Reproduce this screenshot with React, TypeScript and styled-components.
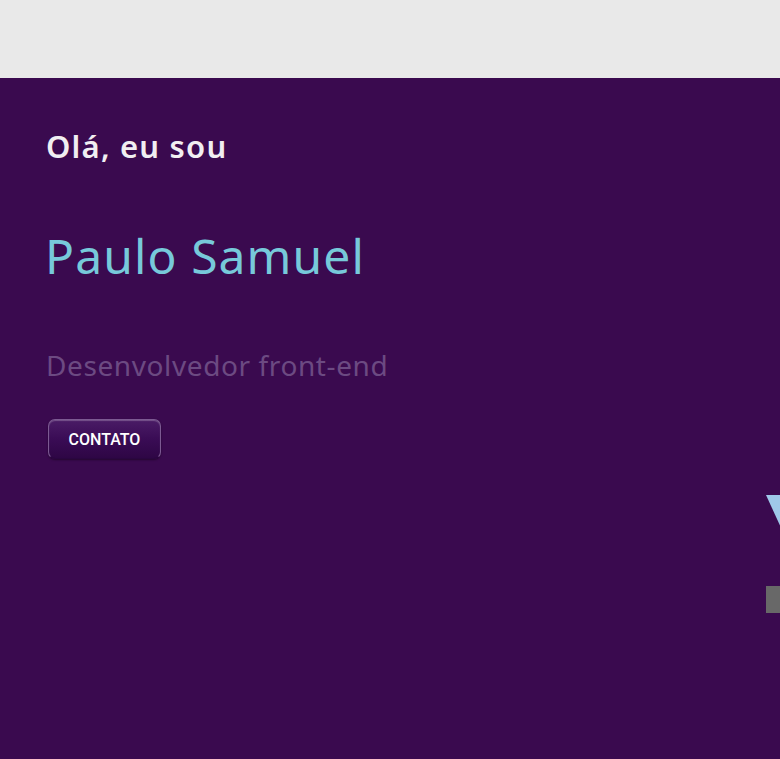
import React from "react";
import styled, { createGlobalStyle } from "styled-components";

const Global = createGlobalStyle`
  html, body { margin: 0; padding: 0; background: #3a0a4f; }
  body { overflow: hidden; font-family: "Noto Sans", "DejaVu Sans", sans-serif; }
`;

const TopBar = styled.header`
  height: 78px;
  background: #e9e9e9;
`;

const Hero = styled.section`
  display: flex;
  height: 681px;
  background: #3a0a4f;
  overflow: hidden;
`;

const Intro = styled.div`
  flex: 0 0 766px;
  box-sizing: border-box;
  padding: 47px 0 0 46px;
  display: flex;
  flex-direction: column;
  align-items: flex-start;
`;

const Greeting = styled.h2`
  margin: 0;
  font-size: 31px;
  font-weight: 600;
  line-height: 42px;
  letter-spacing: 1.2px;
  color: #f1eef2;
`;

const Name = styled.h1`
  margin: 59px 0 0 -1px;
  font-size: 48px;
  font-weight: 400;
  line-height: 60px;
  letter-spacing: 1.1px;
  color: #77c9da;
`;

const Role = styled.p`
  margin: 60px 0 0;
  font-size: 28px;
  font-weight: 400;
  line-height: 38px;
  letter-spacing: 0.6px;
  color: #6c4a82;
`;

const ContactButton = styled.button`
  margin: 35px 0 0 2px;
  width: 113px;
  height: 40px;
  padding: 0;
  border-radius: 7px;
  border: 1px solid #7c5a92;
  border-bottom-color: #2a0640;
  background: linear-gradient(180deg, #4a1c66 0%, #3a0c55 50%, #2e0645 100%);
  box-shadow: inset 0 1px 1px rgba(255, 255, 255, 0.25), 0 1px 2px rgba(0, 0, 0, 0.4);
  color: #ffffff;
  font-family: Roboto, "Liberation Sans", sans-serif;
  font-size: 16px;
  font-weight: 500;
  cursor: pointer;
`;

const Illustration = styled.div`
  flex: 0 0 auto;
  padding-top: 417px;
  display: flex;
  flex-direction: column;
`;

const Art = styled.svg`
  display: block;
`;

export default function App() {
  return (
    <>
      <Global />
      <TopBar />
      <Hero>
        <Intro>
          <Greeting>Olá, eu sou</Greeting>
          <Name>Paulo Samuel</Name>
          <Role>Desenvolvedor front-end</Role>
          <ContactButton>CONTATO</ContactButton>
        </Intro>
        <Illustration>
          <Art width="60" height="120" viewBox="0 0 60 120">
            <polygon points="0,0 60,0 44,96" fill="#9fc8e9" />
            <rect x="0" y="91" width="60" height="27" fill="#686868" />
          </Art>
        </Illustration>
      </Hero>
    </>
  );
}
